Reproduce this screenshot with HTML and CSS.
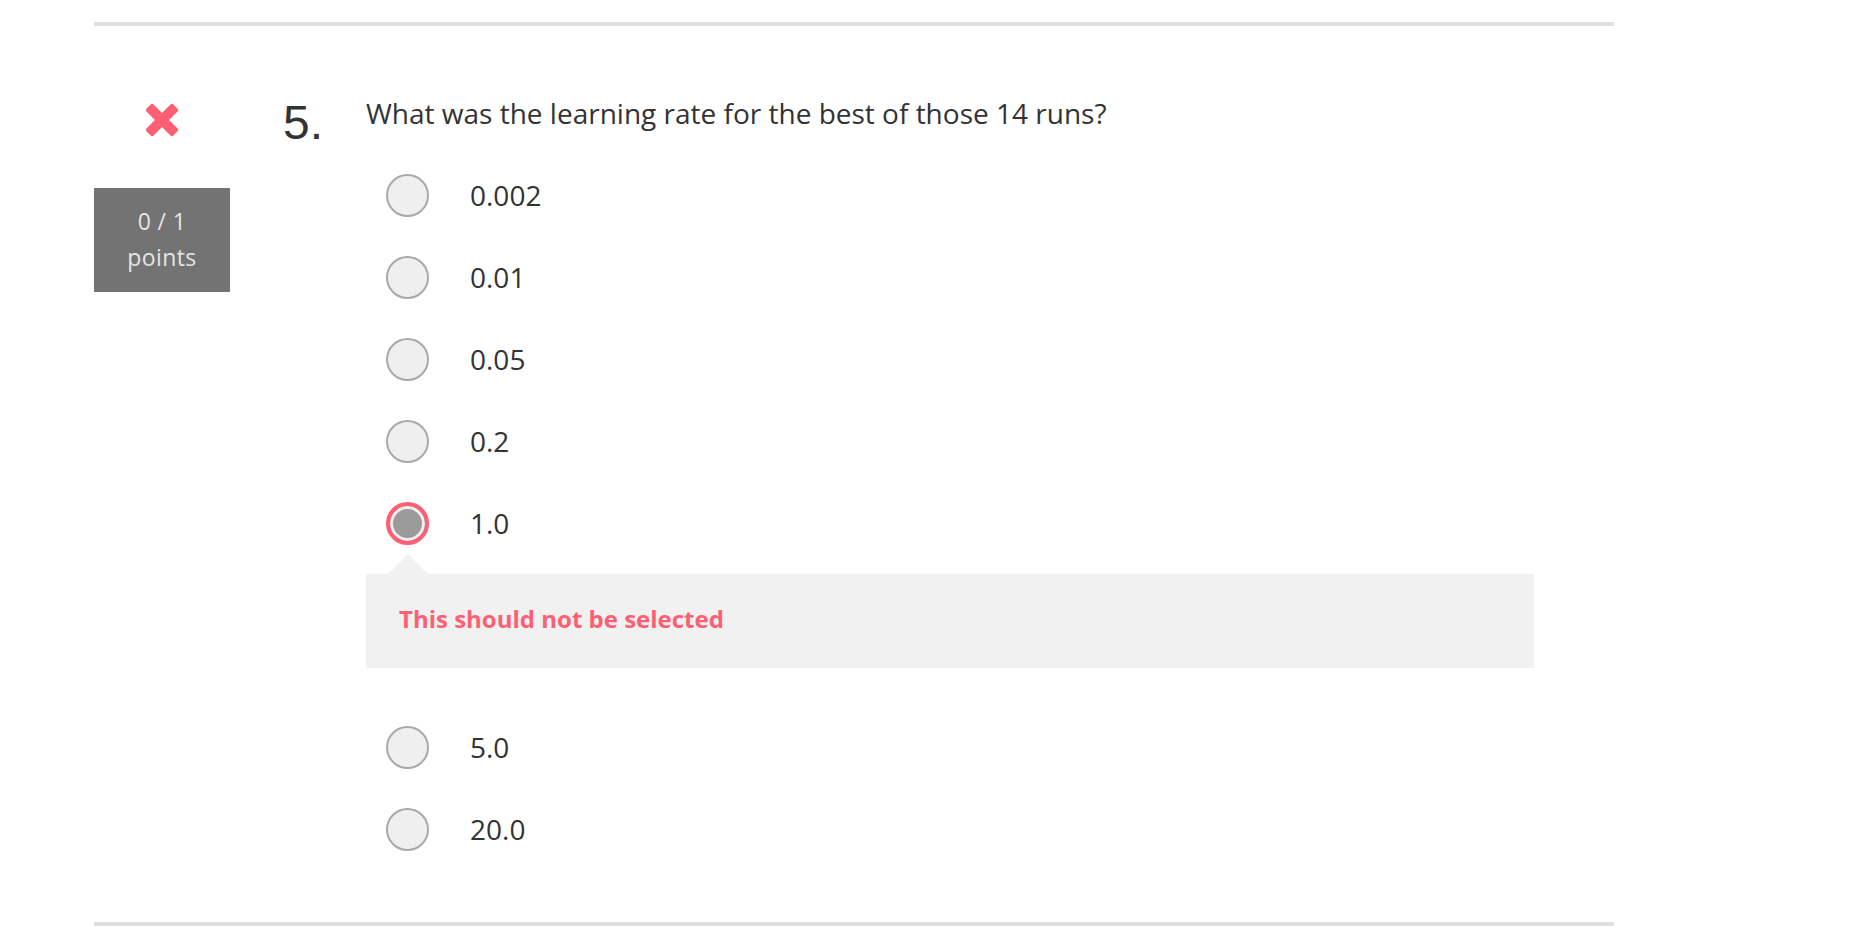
FILE: index.html
```html
<!DOCTYPE html>
<html lang="en">
<head>
<meta charset="utf-8">
<title>Quiz question 5</title>
<link rel="stylesheet" href="styles.css">
</head>
<body>
<div class="wrap">
  <hr class="rule">
  <div class="question">
    <div class="side">
      <svg class="wrong-icon" width="34" height="34" viewBox="0 0 34 34" aria-hidden="true">
        <rect x="-2" y="12" width="38" height="10" rx="2" transform="rotate(45 17 17)" fill="#ff5f73"/>
        <rect x="-2" y="12" width="38" height="10" rx="2" transform="rotate(-45 17 17)" fill="#ff5f73"/>
      </svg>
      <div class="points">0 / 1<br>points</div>
    </div>
    <div class="num">5.</div>
    <div class="body">
      <div class="prompt">What was the learning rate for the best of those 14 runs?</div>
      <div class="options">
        <div class="option"><span class="radio"></span><span class="label">0.002</span></div>
        <div class="option"><span class="radio"></span><span class="label">0.01</span></div>
        <div class="option"><span class="radio"></span><span class="label">0.05</span></div>
        <div class="option"><span class="radio"></span><span class="label">0.2</span></div>
        <div class="option"><span class="radio selected"></span><span class="label">1.0</span></div>
      </div>
      <div class="feedback">This should not be selected</div>
      <div class="options options-after">
        <div class="option"><span class="radio"></span><span class="label">5.0</span></div>
        <div class="option"><span class="radio"></span><span class="label">20.0</span></div>
      </div>
    </div>
  </div>
  <hr class="rule">
</div>
</body>
</html>
```

FILE: styles.css
```css
html, body {
  margin: 0;
  padding: 0;
  background: #fff;
}

body {
  font-family: "Open Sans", "Noto Sans", sans-serif;
  color: #333;
}

.wrap {
  margin-left: 94px;
  width: 1520px;
  padding-top: 22px;
}

.rule {
  margin: 0;
  border: 0;
  height: 4px;
  background: #dfdfdf;
}

.question {
  display: flex;
  align-items: flex-start;
  padding-top: 65px;
  padding-bottom: 71px;
}

.side {
  width: 136px;
  display: flex;
  flex-direction: column;
  align-items: center;
}

.wrong-icon {
  display: block;
  margin-top: 12px;
}

.points {
  margin-top: 51px;
  width: 136px;
  box-sizing: border-box;
  background: #737373;
  color: #e4e4e4;
  font-size: 23px;
  letter-spacing: 0.4px;
  line-height: 36px;
  text-align: center;
  padding: 15px 0 17px;
}

.num {
  margin-left: 53px;
  width: 83px;
  margin-top: 8px;
  font-family: "Liberation Sans", Arial, sans-serif;
  font-size: 48px;
  line-height: 48px;
  color: #333;
}

.body {
  flex: 1;
}

.prompt {
  margin-top: 1px;
  font-size: 28px;
  line-height: 42px;
  color: #333;
}

.options {
  display: flex;
  flex-direction: column;
  gap: 39px;
  margin-top: 40px;
  padding-left: 20px;
}

.options-after {
  margin-top: 58px;
}

.option {
  display: flex;
  align-items: center;
  height: 43px;
}

.radio {
  width: 43px;
  height: 43px;
  box-sizing: border-box;
  border-radius: 50%;
  border: 2px solid #a9a9a9;
  background: #efefef;
  flex: none;
}

.radio.selected {
  border: 4px solid #ff5f73;
  background: #9b9b9b;
  box-shadow: inset 0 0 0 3px #efefef;
}

.label {
  margin-left: 41px;
  font-size: 28px;
  line-height: 40px;
  padding-bottom: 2px;
  color: #333;
}

.feedback {
  position: relative;
  margin-top: 29px;
  margin-right: 80px;
  background: #f1f1f1;
  color: #ff5f73;
  font-weight: 700;
  font-size: 24px;
  line-height: 36px;
  padding: 27px 33px 31px;
}

.feedback::before {
  content: "";
  position: absolute;
  top: -20px;
  left: 22px;
  width: 0;
  height: 0;
  border-left: 20px solid transparent;
  border-right: 20px solid transparent;
  border-bottom: 20px solid #f1f1f1;
}
```
